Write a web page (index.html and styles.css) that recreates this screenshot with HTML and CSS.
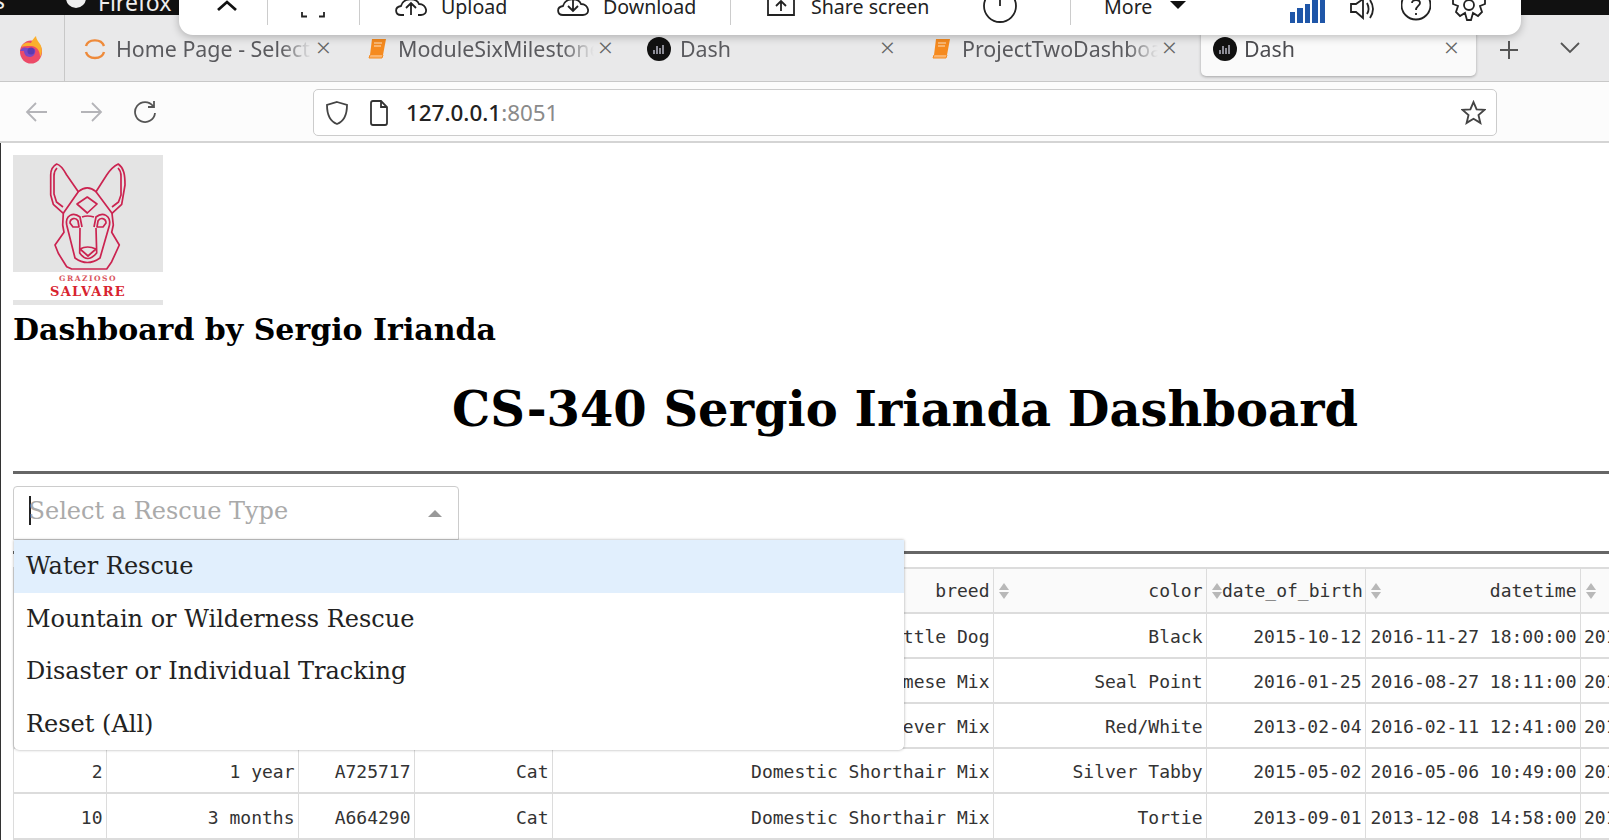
FILE: index.html
```html
<!DOCTYPE html>
<html lang="en">
  <head>
    <meta charset="UTF-8" />
    <title>Dash</title>
    <link rel="stylesheet" href="styles.css">
  </head>
  <body>
    <!-- Desktop top bar, mostly off screen -->
    <div class="top-bar">
      <span class="top-edge">s</span>
      <span class="top-dot"></span>
      <span class="top-label">Firefox</span>
    </div>

    <!-- Zoom meeting toolbar, lies over the browser -->
    <div class="zoom-bar">
      <svg class="zb-chevron" viewBox="0 0 24 35"><path d="M3 10 L12 2 L21 10" /></svg>
      <span class="zb-sep zb-sep-a"></span>
      <svg class="zb-full" viewBox="0 0 26 35"><path d="M2 12 V16.5 H7 M24 12 V16.5 H19" /></svg>
      <span class="zb-sep zb-sep-b"></span>
      <div class="zb-btn zb-upload">
        <svg class="zb-cloud" viewBox="0 0 34 35"><path d="M10 15 H7 C1 15 0 7 7 6 C9 -2 22 -3 25 4 C33 4 35 15 27 15 H24 M17 15 V3 M12 8 L17 3 L22 8" /></svg>
        <span>Upload</span>
      </div>
      <div class="zb-btn zb-download">
        <svg class="zb-cloud" viewBox="0 0 34 35"><path d="M10 15 H7 C1 15 0 7 7 6 C9 -2 22 -3 25 4 C33 4 35 15 27 15 H10 M17 0 V11 M12 6 L17 11 L22 6" /></svg>
        <span>Download</span>
      </div>
      <span class="zb-sep"></span>
      <div class="zb-btn zb-share">
        <svg class="zb-shareicon" viewBox="0 0 28 35"><path d="M1 -4 V15 H27 V-4 M14 11 V2 M9 6 L14 1 L19 6" /></svg>
        <span>Share screen</span>
      </div>
      <svg class="zb-circle" viewBox="0 0 34 35"><circle cx="17" cy="6" r="16" /><path d="M17 -2 V6" /></svg>
      <span class="zb-sep zb-sep-c"></span>
      <div class="zb-btn zb-more">
        <span>More</span>
        <span class="zb-triangle"></span>
      </div>
      <div class="zb-bars">
        <span class="bar bar-1"></span>
        <span class="bar bar-2"></span>
        <span class="bar bar-3"></span>
        <span class="bar bar-4"></span>
        <span class="bar bar-5"></span>
      </div>
      <svg class="zb-speaker" viewBox="0 0 25 35"><path d="M2 4 H7 L14 -1 V18 L7 12 H2 Z M18 3 C20 7 20 11 18 14 M21 0 C25 6 25 12 21 18" /></svg>
      <svg class="zb-help" viewBox="0 0 30 35"><circle cx="15" cy="5" r="14.5" /><path d="M11 3 C11 -1 19 -1 19 3 C19 6 15 6 15 10 M15 13 V15" /></svg>
      <svg class="zb-gear" viewBox="0 0 42 35"><path d="M5 4 L10 6 L8 12 L12 16 L17 13 L19 20 H23 L25 13 L30 16 L34 12 L32 6 L37 4 V-3 H5 Z" /><circle cx="21" cy="5" r="5" /></svg>
    </div>

    <!-- Browser tab strip -->
    <div class="tab-strip">
      <div class="ff-slot">
        <svg class="ff-logo" viewBox="0 0 24 28">
          <ellipse cx="12" cy="16" rx="11" ry="11.5" fill="#ec4a68" />
          <path d="M2 11 C5 6 9 6 12 7 C13 4 15 2 17 0 C17 3 19 5 21 8 C24 13 23 18 21 21 C21 15 18 10 12 10 C7 10 4 10 2 11 Z" fill="#fbaf2d" />
          <path d="M1 15 C3 11 6 11 8 12 L16 13 C17 17 15 21 11 21 C7 21 5 18 5 15 Z" fill="#7a48c4" />
          <circle cx="12" cy="15" r="3.5" fill="#5a3ab0" />
        </svg>
      </div>
      <div class="tab">
        <svg class="tab-icon" viewBox="0 0 24 24"><path class="spin" d="M3 9 C5 2 18 1 21 9 M3 15 C5 23 19 23 21 15" /></svg>
        <span class="tab-title">Home Page - Select</span>
        <span class="tab-close">&times;</span>
      </div>
      <div class="tab">
        <svg class="tab-icon" viewBox="0 0 24 24"><path class="book" d="M7 2 H21 L18 18 H5 Z" /><path class="book-edge" d="M5 18 L4 21 H17 L18 18" /><path class="book-line" d="M9 6 H17 M9 9 H16" /></svg>
        <span class="tab-title">ModuleSixMilestone</span>
        <span class="tab-close">&times;</span>
      </div>
      <div class="tab">
        <svg class="tab-icon" viewBox="0 0 24 24"><circle cx="12" cy="12" r="12" fill="#111" /><path class="dash-bars" d="M7 17 V13 M10 17 V9 M13 17 V11 M16 17 V8" /></svg>
        <span class="tab-title">Dash</span>
        <span class="tab-close">&times;</span>
      </div>
      <div class="tab">
        <svg class="tab-icon" viewBox="0 0 24 24"><path class="book" d="M7 2 H21 L18 18 H5 Z" /><path class="book-edge" d="M5 18 L4 21 H17 L18 18" /><path class="book-line" d="M9 6 H17 M9 9 H16" /></svg>
        <span class="tab-title">ProjectTwoDashboa</span>
        <span class="tab-close">&times;</span>
      </div>
      <div class="tab tab-active">
        <svg class="tab-icon" viewBox="0 0 24 24"><circle cx="12" cy="12" r="12" fill="#111" /><path class="dash-bars" d="M7 17 V13 M10 17 V9 M13 17 V11 M16 17 V8" /></svg>
        <span class="tab-title">Dash</span>
        <span class="tab-close">&times;</span>
      </div>
      <svg class="tab-plus" viewBox="0 0 20 20"><path d="M10 1 V19 M1 10 H19" /></svg>
      <svg class="tab-list" viewBox="0 0 20 12"><path d="M1 1 L10 10 L19 1" /></svg>
    </div>

    <!-- Navigation bar -->
    <div class="nav-bar">
      <svg class="nav-icon nav-back" viewBox="0 0 24 24"><path d="M22 12 H2 M11 3 L2 12 L11 21" /></svg>
      <svg class="nav-icon nav-forward" viewBox="0 0 24 24"><path d="M2 12 H22 M13 3 L22 12 L13 21" /></svg>
      <svg class="nav-icon nav-reload" viewBox="0 0 24 24"><path d="M20 6 A10 10 0 1 0 22 13 M21 1 V7 H15" /></svg>
      <div class="url-box">
        <svg class="url-shield" viewBox="0 0 24 26"><path d="M12 2 L22 5 C22 14 20 21 12 24 C4 21 2 14 2 5 Z" /></svg>
        <svg class="url-page" viewBox="0 0 20 26"><path d="M2 3 Q2 1 4 1 H12 L18 7 V23 Q18 25 16 25 H4 Q2 25 2 23 Z M12 1 V7 H18" /></svg>
        <span class="url-text">127.0.0.1<span class="url-port">:8051</span></span>
        <svg class="url-star" viewBox="0 0 24 24"><path d="M12 2 L15 9 L22.5 9.5 L16.8 14.5 L18.6 22 L12 18 L5.4 22 L7.2 14.5 L1.5 9.5 L9 9 Z" /></svg>
      </div>
    </div>

    <!-- Dash app -->
    <div class="viewport">
      <div class="page">
        <div class="logo">
          <svg class="logo-dog" viewBox="0 0 150 117">
            <!-- head outline -->
            <path d="M43.7 9 C40 11 37.7 14 37.7 20 V40 L40.3 49.3 L50.3 58.3 L49.7 70 L51 77.3 L42 90 L45.3 98.3 L53.7 111.7 L58.7 114 H93.7 L98.7 106.7 L106.3 90 L98.7 77.3 L100.3 70 L99 58.3 L108.7 49.3 L112 30 C112 20 111 13 105.3 9 C101 11 97 15 93.7 20 L83 36.7 Q74.3 29 65.3 36.7 L53.7 20 C51 15 48 10 43.7 9 Z" />
            <!-- inner ears -->
            <path d="M44 13 C42 15 41 17 41 21 V39 L43.5 47 L50 52 M105 13 C107 15 108 17 108 21 L108 40 L105.5 47 L99 52" />
            <path d="M65.3 36.7 L50.3 58.3 M83 36.7 L99 58.3" />
            <!-- forehead diamond -->
            <path d="M64 49 L74.3 42 L84 49 L74.3 58 Z" />
            <!-- eyes -->
            <path d="M53.7 70 C52 61 60 56 67 62 L69 72 M96.5 70 C98 61 90 56 83 62 L81 72" />
            <path d="M57 68 C57 63 63 62 65 66 L66 72 L60 72 Z M93 68 C93 63 87 62 85 66 L84 72 L90 72 Z" />
            <!-- muzzle -->
            <path d="M53.7 70 L62 103 Q74.3 112 87 103 L96.5 70" />
            <path d="M67 73 L66.7 98 Q74.3 109 83.7 98 L83 73 M69 62 Q74.3 60 81 62" />
            <path d="M67 94 Q74.3 90 83 94 L75 101 Z" />
          </svg>
          <div class="logo-words">
            <span class="logo-small">GRAZIOSO</span>
            <span class="logo-big">SALVARE</span>
          </div>
          <div class="logo-foot"></div>
        </div>

        <h2 class="byline">Dashboard by Sergio Irianda</h2>
        <h1 class="title">CS-340 Sergio Irianda Dashboard</h1>
        <hr class="rule rule-first" />

        <div class="dropdown">
          <span class="dd-cursor"></span>
          <span class="dd-placeholder">Select a Rescue Type</span>
          <span class="dd-arrow"></span>
          <div class="dd-menu">
            <div class="dd-option dd-focused">Water Rescue</div>
            <div class="dd-option">Mountain or Wilderness Rescue</div>
            <div class="dd-option">Disaster or Individual Tracking</div>
            <div class="dd-option">Reset (All)</div>
          </div>
        </div>

        <hr class="rule rule-second" />

        <table class="data-table">
          <colgroup>
            <col class="c-index" />
            <col class="c-age" />
            <col class="c-id" />
            <col class="c-type" />
            <col class="c-breed" />
            <col class="c-color" />
            <col class="c-dob" />
            <col class="c-datetime" />
            <col class="c-month" />
          </colgroup>
          <thead>
            <tr>
              <th><div class="th-in"><span class="sort"></span></div></th>
              <th><div class="th-in"><span class="sort"></span></div></th>
              <th><div class="th-in"><span class="sort"></span></div></th>
              <th><div class="th-in"><span class="sort"></span></div></th>
              <th><div class="th-in"><span class="sort"></span><span class="th-name">breed</span></div></th>
              <th><div class="th-in"><span class="sort"></span><span class="th-name">color</span></div></th>
              <th><div class="th-in"><span class="sort"></span><span class="th-name">date_of_birth</span></div></th>
              <th><div class="th-in"><span class="sort"></span><span class="th-name">datetime</span></div></th>
              <th><div class="th-in"><span class="sort"></span></div></th>
            </tr>
          </thead>
          <tbody>
            <tr><td></td><td></td><td></td><td></td><td>Australian Cattle Dog</td><td>Black</td><td>2015-10-12</td><td>2016-11-27 18:00:00</td><td>2016-11-27T18:00:00</td></tr>
            <tr><td></td><td></td><td></td><td></td><td>Siamese Mix</td><td>Seal Point</td><td>2016-01-25</td><td>2016-08-27 18:11:00</td><td>2016-08-27T18:11:00</td></tr>
            <tr><td></td><td></td><td></td><td></td><td>Labrador Retriever Mix</td><td>Red/White</td><td>2013-02-04</td><td>2016-02-11 12:41:00</td><td>2016-02-11T12:41:00</td></tr>
            <tr><td>2</td><td>1 year</td><td>A725717</td><td>Cat</td><td>Domestic Shorthair Mix</td><td>Silver Tabby</td><td>2015-05-02</td><td>2016-05-06 10:49:00</td><td>2016-05-06T10:49:00</td></tr>
            <tr><td>10</td><td>3 months</td><td>A664290</td><td>Cat</td><td>Domestic Shorthair Mix</td><td>Tortie</td><td>2013-09-01</td><td>2013-12-08 14:58:00</td><td>2013-12-08T14:58:00</td></tr>
            <tr><td></td><td></td><td></td><td></td><td></td><td></td><td></td><td></td><td></td></tr>
          </tbody>
        </table>
      </div>
    </div>
  </body>
</html>
```

FILE: styles.css
```css
/* Global */
html,
body {
  margin: 0;
  padding: 0;
  height: 840px;
  overflow: hidden;
  background-color: white;
}

body {
  position: relative;
  font-family: "Noto Sans", sans-serif;
}

svg {
  display: block;
  flex: none;
  fill: none;
}

/* Top bar */
.top-bar {
  height: 15px;
  background-color: #111;
  color: #eee;
  display: flex;
  overflow: hidden;
  font-size: 23px;
  line-height: 14px;
}

.top-edge {
  width: 4px;
  margin: -7px 0 0 -6px;
}

.top-dot {
  width: 20px;
  height: 20px;
  margin: -12px 0 0 68px;
  border-radius: 50%;
  background-color: #eee;
}

.top-label {
  margin-left: 12px;
  margin-top: -5px;
  white-space: nowrap;
}

/* Zoom toolbar */
.zoom-bar {
  position: absolute;
  top: 0;
  left: 179px;
  z-index: 5;
  width: 1342px;
  height: 35px;
  display: flex;
  align-items: flex-start;
  overflow: hidden;
  background-color: white;
  border-radius: 0 0 14px 14px;
  box-shadow: 0 2px 8px rgba(0, 0, 0, 0.25);
  font-size: 19.6px;
  line-height: 14px;
  color: #222;
}

.zoom-bar svg {
  height: 35px;
  stroke: #222;
  stroke-width: 1.8;
}

.zb-sep {
  flex: none;
  width: 1px;
  height: 25px;
  background-color: #ccc;
}

.zb-sep-a { margin-left: 28px; }
.zb-sep-b { margin-left: 33px; }
.zb-sep-c { margin-left: 53px; }

.zb-chevron { width: 24px; margin-left: 36px; }
.zoom-bar .zb-chevron { stroke-width: 2.8; stroke: #111; }
.zb-full { width: 26px; margin-left: 32px; }

.zb-btn {
  flex: none;
  display: flex;
  gap: 13px;
  white-space: nowrap;
}

.zb-cloud { width: 34px; }
.zb-upload { width: 146px; margin-left: 34px; }
.zb-download { width: 174px; margin-left: 16px; }
.zb-share { width: 190px; margin-left: 36px; gap: 16px; }
.zb-shareicon { width: 28px; }
.zb-circle { width: 34px; margin-left: 26px; }
.zb-more { width: 82px; margin-left: 33px; justify-content: space-between; }

.zb-triangle {
  width: 0;
  height: 0;
  margin-top: 1px;
  border-left: 8px solid transparent;
  border-right: 8px solid transparent;
  border-top: 8px solid #111;
}

.zb-bars {
  flex: none;
  display: flex;
  align-items: flex-end;
  gap: 2px;
  width: 35px;
  height: 23px;
  margin-left: 104px;
}

.bar {
  width: 5.4px;
  background-color: #1f56a8;
}

.bar-1 { height: 11px; }
.bar-2 { height: 15px; }
.bar-3 { height: 19px; }
.bar-4 { height: 23px; }
.bar-5 { height: 23px; }

.zb-speaker { width: 25px; margin-left: 24px; }
.zb-help { width: 30px; margin-left: 27px; }
.zb-gear { width: 42px; margin-left: 17px; }

/* Tab strip */
.tab-strip {
  height: 66px;
  display: flex;
  align-items: flex-start;
  background-color: #e9e9ea;
  border-bottom: 1px solid #c8c8c8;
  font-size: 21.4px;
  color: #5a5a5e;
}

.ff-slot {
  flex: none;
  width: 65px;
  height: 66px;
  box-sizing: border-box;
  border-right: 1px solid #c8c8c8;
  padding: 21px 0 0 19px;
  margin-right: 3px;
}

.ff-logo {
  width: 24px;
  height: 28px;
}

.tab {
  flex: none;
  width: 273px;
  height: 61px;
  margin-right: 9px;
  padding-left: 15px;
  box-sizing: border-box;
  display: flex;
  align-items: center;
  border-radius: 0 0 5px 5px;
}

.tab-icon {
  width: 24px;
  height: 24px;
  margin-top: 7px;
}

.tab-title {
  width: 196px;
  margin: 6px 0 0 9px;
  white-space: nowrap;
  overflow: hidden;
  -webkit-mask-image: linear-gradient(to right, black 84%, transparent 100%);
  mask-image: linear-gradient(to right, black 84%, transparent 100%);
}

.tab-close {
  margin: 3px 0 0 4px;
  font-size: 26px;
  font-weight: 300;
  color: #666;
}

.tab-active {
  width: 275px;
  margin-left: 5px;
  padding-left: 12px;
  background-color: #fafafa;
  box-shadow: 0 1px 3px rgba(0, 0, 0, 0.3);
  color: #4c4c50;
}

.tab-active .tab-title {
  margin-left: 7px;
}

.spin {
  stroke: #ee8a3a;
  stroke-width: 2.4;
}

.book { fill: #f58a1f; }
.book-edge { fill: #fbb36b; stroke: #f58a1f; stroke-width: 1; }
.book-line { stroke: #fde0c0; stroke-width: 1.2; }
.dash-bars { stroke: #8c8c96; stroke-width: 2; }

.tab-plus {
  width: 20px;
  height: 20px;
  margin: 25px 0 0 14px;
  stroke: #555;
  stroke-width: 2;
}

.tab-list {
  width: 20px;
  height: 12px;
  margin: 27px 0 0 41px;
  stroke: #555;
  stroke-width: 1.8;
}

/* Nav bar */
.nav-bar {
  height: 61px;
  box-sizing: border-box;
  display: flex;
  align-items: center;
  background-color: #fcfcfc;
  border-bottom: 2px solid #d4d4d4;
}

.nav-icon {
  width: 24px;
  height: 24px;
  stroke-width: 1.8;
}

.nav-back { margin-left: 25px; stroke: #b4b4b8; }
.nav-forward { margin-left: 30px; stroke: #b4b4b8; }
.nav-reload { margin-left: 30px; stroke: #555; }

.url-box {
  width: 1184px;
  height: 47px;
  margin: 2px 0 0 156px;
  box-sizing: border-box;
  display: flex;
  align-items: center;
  background-color: white;
  border: 1px solid #ccc;
  border-radius: 5px;
}

.url-shield {
  width: 24px;
  height: 26px;
  margin-left: 11px;
  stroke: #444;
  stroke-width: 1.8;
}

.url-page {
  width: 20px;
  height: 26px;
  margin-left: 20px;
  stroke: #333;
  stroke-width: 1.8;
}

.url-text {
  margin-left: 17px;
  font-size: 22.4px;
  font-weight: 500;
  color: #222;
}

.url-port {
  color: #8a8a8a;
  font-weight: 400;
}

.url-star {
  width: 25px;
  height: 25px;
  margin-left: auto;
  margin-right: 10px;
  stroke: #444;
  stroke-width: 1.8;
}

/* App area */
.viewport {
  height: 697px;
  overflow: hidden;
  border-left: 1px solid #333;
}

.page {
  width: 1784px;
  margin-left: 12px;
  padding-top: 12px;
  font-family: "DejaVu Serif", serif;
  color: #000;
}

/* Logo */
.logo {
  width: 150px;
  height: 150px;
  display: flex;
  flex-direction: column;
  background-color: white;
}

.logo-dog {
  width: 150px;
  height: 117px;
  background-color: #e4e4e4;
  stroke: #cb2350;
  stroke-width: 1.7;
  stroke-linejoin: round;
}

.logo-words {
  height: 28px;
  display: flex;
  flex-direction: column;
  align-items: center;
  justify-content: center;
  color: #d8232f;
  font-weight: bold;
}

.logo-small {
  font-size: 7.5px;
  line-height: 10px;
  letter-spacing: 1.5px;
  color: #d9545c;
}

.logo-big {
  font-size: 13px;
  line-height: 15px;
  letter-spacing: 1.3px;
}

.logo-foot {
  height: 5px;
  background-color: #e4e4e4;
}

/* Headings */
.byline {
  margin: 5px 0 0;
  font-size: 30px;
  line-height: 40px;
}

.title {
  margin: 29px 0 0;
  font-size: 48px;
  line-height: 60px;
  text-align: center;
}

.rule {
  height: 3px;
  margin: 0;
  border: none;
  background-color: #666;
}

.rule-first { margin-top: 32px; }
.rule-second { margin-top: 11px; }

/* Rescue type dropdown */
.dropdown {
  position: relative;
  width: 446px;
  height: 54px;
  margin-top: 12px;
  box-sizing: border-box;
  display: flex;
  align-items: center;
  padding: 0 0 5px 15px;
  background-color: white;
  border: 1px solid #ccc;
  border-radius: 4px 4px 0 0;
  font-size: 24px;
}

.dd-cursor {
  width: 1.5px;
  height: 29px;
  background-color: #222;
}

.dd-placeholder {
  color: #aaa;
  margin-left: -2px;
}

.dd-arrow {
  position: absolute;
  right: 16px;
  top: 23px;
  border-left: 7px solid transparent;
  border-right: 7px solid transparent;
  border-bottom: 7px solid #999;
}

.dd-menu {
  position: absolute;
  top: 53px;
  left: 0;
  z-index: 2;
  width: 890px;
  background-color: white;
  border-radius: 0 0 5px 5px;
  box-shadow: 0 0 3px rgba(0, 0, 0, 0.35);
}

.dd-option {
  height: 52.5px;
  line-height: 52px;
  padding-left: 12px;
  color: #222;
}

.dd-focused {
  background-color: #e1effd;
}

/* Data table */
.data-table {
  margin-top: 13px;
  width: 1772px;
  table-layout: fixed;
  border-collapse: collapse;
  font-family: "DejaVu Sans Mono", monospace;
  font-size: 18px;
  color: #333;
  background-color: white;
}

.c-index { width: 93px; }
.c-age { width: 192px; }
.c-id { width: 116px; }
.c-type { width: 138px; }
.c-breed { width: 441px; }
.c-color { width: 213px; }
.c-dob { width: 159px; }
.c-datetime { width: 215px; }
.c-month { width: 205px; }

.data-table th,
.data-table td {
  height: 45.1px;
  padding: 0 3.5px 0 3px;
  box-sizing: border-box;
  border: 2px solid #dcdcdc;
  border-width: 2px 1.5px;
  text-align: right;
  white-space: nowrap;
  overflow: hidden;
  font-weight: normal;
}

.data-table td {
  padding-top: 2px;
}

.data-table th {
  background-color: #fafafa;
}

.th-in {
  display: flex;
  align-items: center;
  justify-content: space-between;
}

/* Up and down sort arrows */
.sort {
  flex: none;
  display: inline-block;
  width: 0;
  margin: 0 0 9px 2px;
  border-left: 5px solid transparent;
  border-right: 5px solid transparent;
  border-bottom: 7px solid #b8b8b8;
  position: relative;
}

.sort::after {
  content: "";
  position: absolute;
  top: 9px;
  left: -5px;
  border-left: 5px solid transparent;
  border-right: 5px solid transparent;
  border-top: 7px solid #b8b8b8;
}
```
